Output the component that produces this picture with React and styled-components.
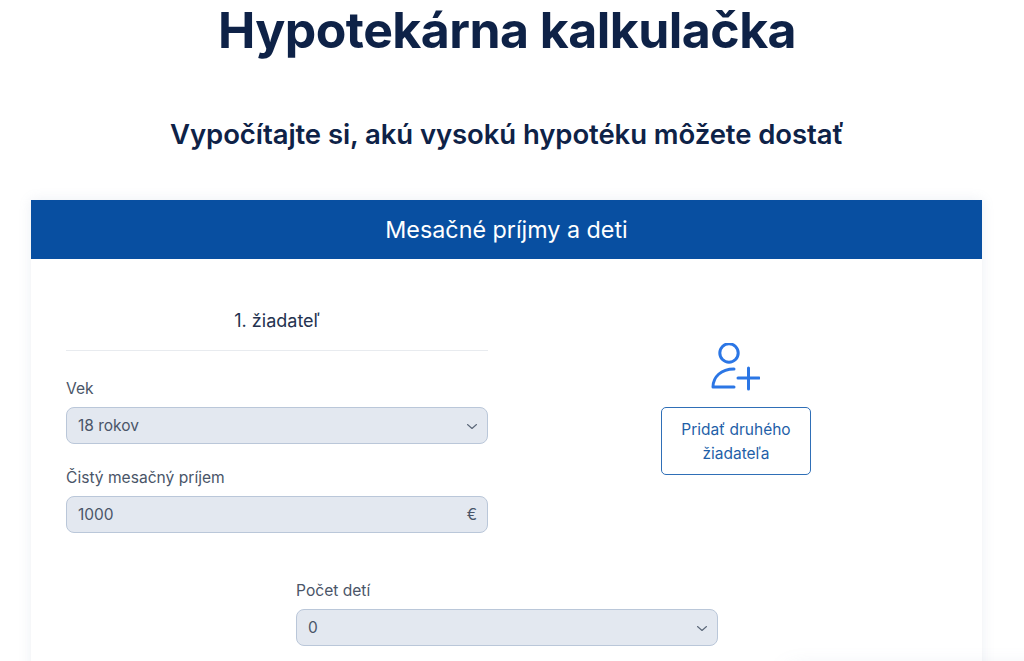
import React from "react";
import styled, { createGlobalStyle } from "styled-components";

const Global = createGlobalStyle`
  html, body { margin: 0; padding: 0; background: #fff; overflow: hidden; }
  body { font-family: Inter, "Liberation Sans", sans-serif; }
`;
const Page = styled.div`
  position: relative;
  box-sizing: border-box;
  height: 661px;
  overflow: hidden;
  padding-left: 31px;
`;
const Heading = styled.header`
  box-sizing: border-box;
  width: 951px;
  padding-left: 1px;
  text-align: center;
  color: #0e2247;
`;
const Title = styled.h1`
  margin: 0;
  height: 60px;
  font-size: 50px;
  line-height: 60px;
  font-weight: 700;
  letter-spacing: -0.55px;
`;
const Subtitle = styled.h2`
  margin: 58px 0 0;
  height: 32px;
  font-size: 27.5px;
  line-height: 32px;
  font-weight: 600;
  letter-spacing: -0.08px;
`;
const Card = styled.section`
  box-sizing: border-box;
  width: 951px;
  height: 520px;
  margin-top: 50px;
  background: #fff;
  box-shadow: 0 0 12px rgba(120, 140, 180, 0.14);
`;
const CardHeader = styled.div`
  height: 59px;
  background: #084fa1;
  color: #fff;
  font-size: 23.3px;
  line-height: 59px;
  text-align: center;
`;
const Applicants = styled.div`
  display: flex;
  padding: 42px 0 0 35px;
`;
const ApplicantColumn = styled.div`
  width: 422px;
  flex: none;
`;
const ApplicantTitle = styled.div`
  height: 49px;
  border-bottom: 1px solid #e8ebef;
  font-size: 18px;
  line-height: 40px;
  color: #24324f;
  text-align: center;
`;
const Field = styled.div`
  margin-top: ${(p) => p.$top}px;
`;
const Label = styled.div`
  font-size: 15.6px;
  line-height: 19px;
  color: #4a5568;
  margin-bottom: 9px;
`;
const Control = styled.div`
  box-sizing: border-box;
  height: 37px;
  display: flex;
  align-items: center;
  justify-content: space-between;
  padding: 0 10px 0 11px;
  background: #e3e8f0;
  border: 1px solid #bac7d9;
  border-radius: 8px;
  font-size: 15.5px;
  color: #4a5568;
`;
const Chevron = styled.svg`
  width: 12px;
  height: 12px;
  margin-right: -1px;
  flex: none;
`;
const AddColumn = styled.div`
  width: 150px;
  margin-left: 173px;
  padding-top: 42px;
  display: flex;
  flex-direction: column;
  align-items: center;
`;
const AddIcon = styled.svg`
  width: 52px;
  height: 50px;
  margin-left: -4px;
  display: block;
`;
const AddButton = styled.button`
  box-sizing: border-box;
  width: 150px;
  height: 68px;
  margin-top: 14px;
  padding: 2px 12px 0;
  background: #fff;
  border: 1px solid #2f6fb7;
  border-radius: 5px;
  font-family: Inter, sans-serif;
  font-size: 15.5px;
  line-height: 24px;
  color: #1f5fa8;
`;
const ChildrenRow = styled.div`
  width: 422px;
  margin: 48px 0 0 265px;
`;
const OffscreenShadow = styled.div`
  position: absolute;
  left: 790px;
  top: 672px;
  width: 300px;
  height: 60px;
  box-shadow: 0 0 24px rgba(120, 140, 180, 0.22);
`;

const ChevronIcon = () => (
  <Chevron viewBox="0 0 12 12" fill="none" stroke="#5a6678" strokeWidth="1.1" strokeLinecap="round" strokeLinejoin="round">
    <path d="M1.500 4.500L6 8.500l4.500-4" />
  </Chevron>
);

export default function App() {
  return (
    <Page>
      <Global />
      <Heading>
        <Title>Hypotekárna kalkulačka</Title>
        <Subtitle>Vypočítajte si, akú vysokú hypotéku môžete dostať</Subtitle>
      </Heading>
      <Card>
        <CardHeader>Mesačné príjmy a deti</CardHeader>
        <Applicants>
          <ApplicantColumn>
            <ApplicantTitle>1. žiadateľ</ApplicantTitle>
            <Field $top={28}>
              <Label>Vek</Label>
              <Control>18 rokov<ChevronIcon /></Control>
            </Field>
            <Field $top={24}>
              <Label>Čistý mesačný príjem</Label>
              <Control>1000<span>€</span></Control>
            </Field>
          </ApplicantColumn>
          <AddColumn>
            <AddIcon viewBox="0 0 52 50" fill="none" stroke="#2b76e5" strokeWidth="3" strokeLinecap="round" strokeLinejoin="round">
              <circle cx="21" cy="10" r="9.2" />
              <path d="M5 44C5 34 13 26 26 26M5 44h21M30 35h21M40.500 25v21" />
            </AddIcon>
            <AddButton>Pridať druhého žiadateľa</AddButton>
          </AddColumn>
        </Applicants>
        <ChildrenRow>
          <Label>Počet detí</Label>
          <Control>0<ChevronIcon /></Control>
        </ChildrenRow>
      </Card>
      <OffscreenShadow />
    </Page>
  );
}
